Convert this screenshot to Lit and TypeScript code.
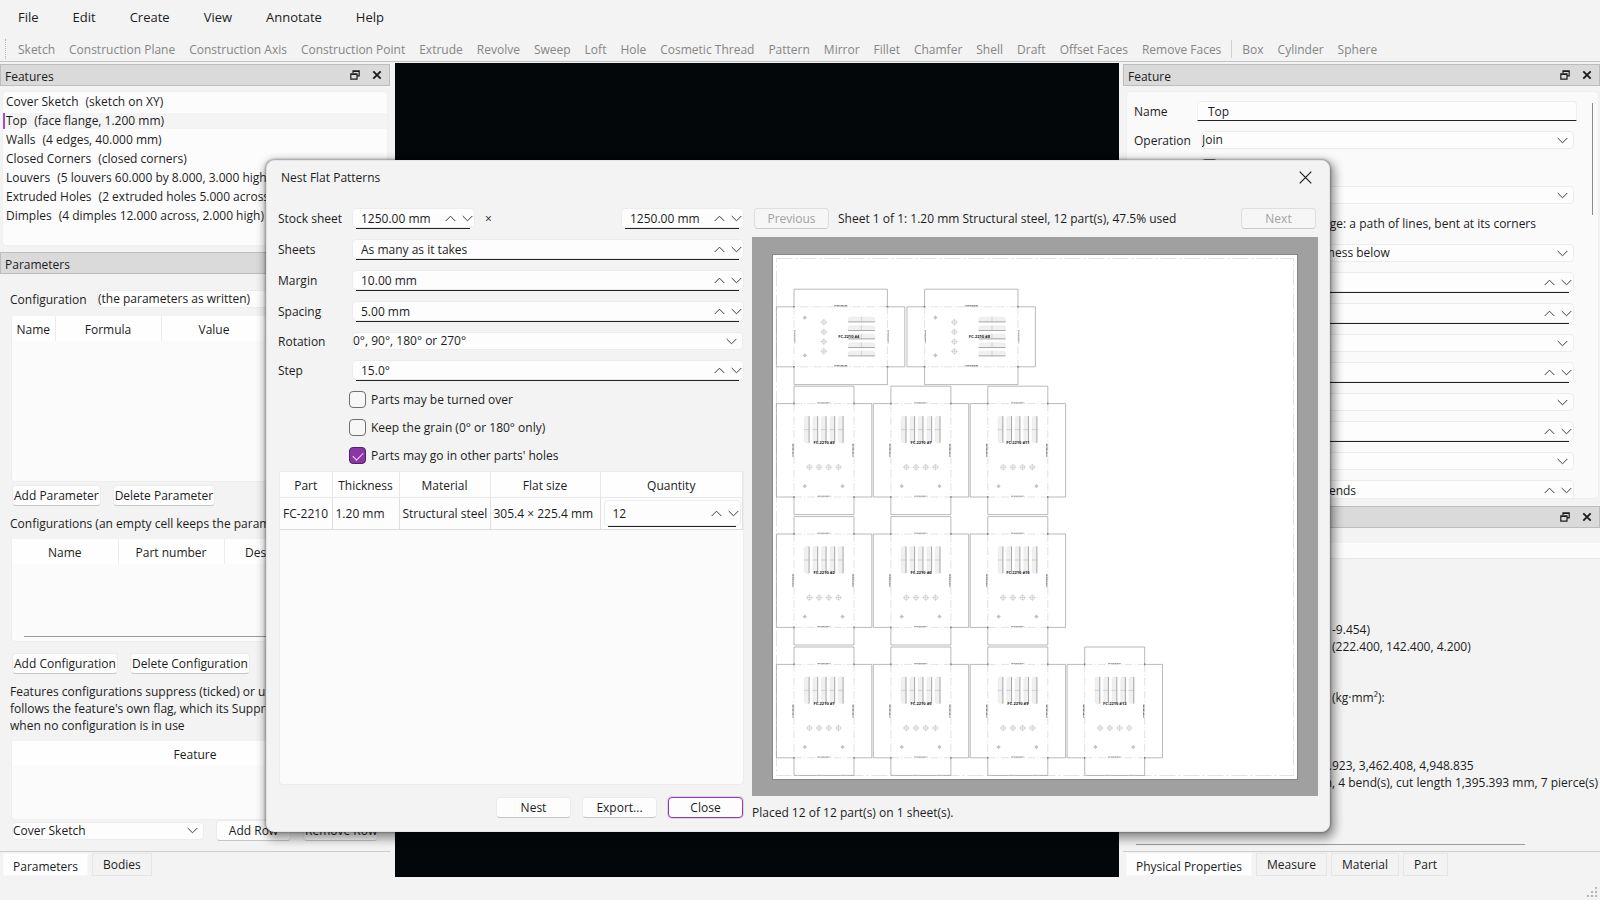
import { LitElement, html, svg, css, nothing } from "lit";
import { customElement } from "lit/decorators.js";

const MENUS = ["File", "Edit", "Create", "View", "Annotate", "Help"];
const TOOLS = ["Sketch", "Construction Plane", "Construction Axis", "Construction Point", "Extrude", "Revolve", "Sweep",
  "Loft", "Hole", "Cosmetic Thread", "Pattern", "Mirror", "Fillet", "Chamfer", "Shell", "Draft", "Offset Faces", "Remove Faces"];
const SOLIDS = ["Box", "Cylinder", "Sphere"];
const FEATURES = [
  ["Cover Sketch", "(sketch on XY)"],
  ["Top", "(face flange, 1.200 mm)"],
  ["Walls", "(4 edges, 40.000 mm)"],
  ["Closed Corners", "(closed corners)"],
  ["Louvers", "(5 louvers 60.000 by 8.000, 3.000 high)"],
  ["Extruded Holes", "(2 extruded holes 5.000 across, 3.000 high)"],
  ["Dimples", "(4 dimples 12.000 across, 2.000 high)"],
];
const PROPERTIES = [
  ["Centre of mass: (111.200, 71.200,\u00a0\u00a0", "-9.454)"],
  ["Bounding box: (0, 0, -40) to\u00a0\u00a0", "(222.400, 142.400, 4.200)"],
  ["", ""],
  ["", ""],
  ["Moments of inertia\u00a0\u00a0", "(kg·mm²):"],
  ["", ""],
  ["", ""],
  ["", ""],
  ["Principal moments: 1,688.", "923, 3,462.408, 4,948.835"],
  ["Flat: 305.400 by 225.400 mm", ", 4 bend(s), cut length 1,395.393 mm, 7 pierce(s)"],
];

/* Nested parts in canvas units: [x, y, number, turned]. */
const PART_H = 128.4;
const PARTS: [number, number, number, boolean][] = [
  [24.4, 52.2, 4, true], [155, 52.2, 8, true],
  [24.4, 149.2, 3, false], [121.3, 149.2, 7, false], [218.2, 149.2, 11, false],
  [24.4, 279.6, 2, false], [121.3, 279.6, 6, false], [218.2, 279.6, 10, false],
  [24.4, 410, 1, false], [121.3, 410, 5, false], [218.2, 410, 9, false], [315.1, 410, 12, false],
];

const up = html`<svg class="chev" viewBox="0 0 11 7" aria-hidden="true"><path d="M.7 6 5.5 1.2 10.3 6" /></svg>`;
const down = html`<svg class="chev" viewBox="0 0 11 7" aria-hidden="true"><path d="M.7 1 5.5 5.8 10.3 1" /></svg>`;

const spin = (id: string, value: string, label = "") => html`
  <div class="spin">
    <input id=${id} type="text" .value=${value} aria-label=${label || nothing} />
    <button aria-label="Increase">${up}</button><button aria-label="Decrease">${down}</button>
  </div>`;

const choice = (id: string, value: string, label = "") => html`
  <div class="choice">
    <select id=${id} aria-label=${label || nothing}><option>${value}</option></select>${down}
  </div>`;

const dockTitle = (title: string) => html`
  <header class="dock-title">
    <h2>${title}</h2>
    <button aria-label="Float">
      <svg width="10" height="10" viewBox="0 0 10 10" aria-hidden="true">
        <path d="M3 3V.8h6.2v5H7M3 1.4h6.2M.8 3.8h6.2v5.4H.8zM.8 4.5H7" fill="none" stroke="#1c1c1c" stroke-width="1.2" />
      </svg>
    </button>
    <button aria-label="Close">
      <svg width="10" height="10" viewBox="0 0 10 10" aria-hidden="true">
        <path d="M1.3 1.3l7.4 7.4M8.7 1.3 1.3 8.7" fill="none" stroke="#1c1c1c" stroke-width="1.9" />
      </svg>
    </button>
  </header>`;

const louver = (x: number) => svg`
  <path d="M${x} 32q.2-2 2-2h2.7v26.6h-2.7q-1.8 0-2-2z" fill="#f0f0f0" stroke="#d8d8d8" stroke-width=".3" />
  <path d="M${x + 4.7} 30v26.6" stroke="#8a8a8a" stroke-width=".7" />
  <path d="M${x - 0.5} 43.4h5.5" stroke="#b4b4b4" stroke-width=".5" />`;

const partShape = svg`
  <g fill="none">
    <path d="M17.6 0h60v17.4h17.8v93.4H77.6v17.6h-60v-17.6H0V17.4h17.6z" stroke="#8c8c8c" stroke-width=".6" />
    <path d="M17.6 17.4h60M17.6 110.8h60M17.6 17.4v93.4M77.6 17.4v93.4" stroke="#c4c4c4" stroke-width=".5" stroke-dasharray="8 2 1.2 2" />
    ${[28, 36.6, 45, 53.6, 62].map(louver)}
    ${[33, 42.7, 52.4, 62.1].map((x) => svg`
      <circle cx=${x} cy="81" r="2.3" stroke="#bcbcbc" stroke-width=".5" />
      <path d="M${x - 3.2} 81h6.4M${x} 77.8v6.4" stroke="#b4b4b4" stroke-width=".5" />`)}
    ${[28.4, 66.2].map((x) => svg`
      <circle cx=${x} cy="100" r="1.2" stroke="#a4a4a4" stroke-width=".5" />
      <path d="M${x - 2} 100h4M${x} 98v4" stroke="#a4a4a4" stroke-width=".5" />`)}
    <path d="M41 16.6h13M41 110h13" stroke="#6a6a6a" stroke-width=".7" stroke-dasharray="2.4 .4 1 .3" />
    <path d="M16.6 57.6v13M76.6 57.6v13" stroke="#505050" stroke-width=".9" stroke-dasharray="2.4 .4 1 .3" />
    <path d="M17.6 16.4v2M77.6 16.4v2M17.6 109.8v2M77.6 109.8v2" stroke="#555" stroke-width=".8" />
  </g>`;

@customElement("app-root")
export class AppRoot extends LitElement {
  static styles = css`
    :host {
      display: flex; flex-direction: column; height: 100vh; position: relative; overflow: hidden;
      background: #f3f3f3; color: #1c1c1c; font: 12px/17px "Open Sans", "Noto Sans", sans-serif;
    }
    * { box-sizing: border-box; }
    button, input, select { font: inherit; color: inherit; margin: 0; padding: 0; border: 0; background: none; outline: 0; }
    h1, h2, p, ul { margin: 0; padding: 0; font: inherit; }
    svg { display: block; }

    .menubar { display: flex; gap: 34px; height: 34px; padding: 0 18px; align-items: center; font-size: 13px; flex: none; }
    .toolbar { display: flex; gap: 14px; height: 28px; padding: 3px 5px 0; align-items: center; color: #858585; border-bottom: 1px solid #c2c2c2; flex: none; white-space: nowrap; }
    .grip { width: 2px; height: 20px; border-left: 1px dotted #b5b5b5; margin-right: -3px; }
    .divider { width: 1px; height: 18px; background: #d0d0d0; margin: 0 -4px; }

    .workspace { display: flex; flex: 1; min-height: 0; }
    .dock { display: flex; flex-direction: column; padding-top: 2px; min-width: 0; }
    .left { width: 390px; }
    .right { width: 477px; }
    .viewport { flex: 1; background: #03070a; margin: 1px 4px 0 5px; }
    .statusbar { height: 23px; flex: none; display: flex; justify-content: flex-end; align-items: flex-end; padding: 2px; }

    .dock-title { display: flex; align-items: center; gap: 12px; height: 22px; flex: none; padding: 0 7px 0 4px; background: #dadada; border: 1px solid #bdbdbd; }
    .dock-title h2 { flex: 1; padding-top: 2px; }
    .dock-title button { width: 10px; height: 10px; }

    .features { list-style: none; background: #fcfcfc; border: 1px solid #f0f0f0; border-radius: 4px; height: 155px; margin: 5px 2px 6px; flex: none; }
    .features li { display: flex; gap: 7px; height: 19px; align-items: center; padding-left: 3px; white-space: nowrap; overflow: hidden; }
    .features .current { background: linear-gradient(#a64cc0, #a64cc0) 0 50% / 2px 16px no-repeat, linear-gradient(#f4f4f4, #f4f4f4) 0 50% / 100% 16px no-repeat; }

    .params { flex: 1; display: flex; flex-direction: column; padding: 16px 11px 0; min-height: 0; }
    .config { display: grid; grid-template-columns: 87px minmax(0, 1fr); height: 17px; align-items: center; margin: 0 0 9px -1px; }
    .grid { background: #fbfbfb; border: 1px solid #eee; border-top: 0; border-radius: 0 0 4px 4px; }
    .grid.one { flex: 1; }
    .grid.two { height: 103px; display: flex; flex-direction: column; justify-content: space-between; }
    .grid.three { height: 79px; }
    .grid table { width: 100%; border-collapse: collapse; table-layout: fixed; }
    .grid th { height: 25px; padding: 2px 0 0; font-weight: 400; background: #fefefe; border-right: 1px solid #ececec; text-align: center; }
    .grid th:last-child { border-right: 0; }
    .grid .w44 { width: 43px; }
    .grid .w106 { width: 106px; }
    .scroll { height: 1px; background: #9a9a9a; margin: 0 12px 4px; }
    .buttons { display: flex; align-items: center; gap: 11px; }
    .params .buttons { margin-left: 1px; gap: 12px; }
    .params .btn { padding: 0 1px; }
    .after-one { margin-top: 3px; }
    .caption { margin: 9px 0 7px -1px; white-space: nowrap; overflow: hidden; }
    .after-two { margin-top: 11px; }
    .note { margin: 9px 0 7px -1px; white-space: nowrap; overflow: hidden; }
    .params .rowbar { margin: 0 0 10px 1px; }
    .rowbar .choice { width: 192px; }
    .btn { height: 21px; padding: 0 4px; background: #fdfdfd; border: 1px solid #ebebeb; border-bottom-color: #c6c6c6; border-radius: 4px; white-space: nowrap; text-align: center; }
    .btn.wide { width: 75px; }
    .btn.primary { border: 1px solid #8b3fa3; box-shadow: 0 0 0 1px #c79bd466; }
    .btn:disabled { background: #f6f6f6; color: #a2a2a2; border-color: #dedede; border-bottom-color: #cbcbcb; }

    .tabs { display: flex; gap: 4px; height: 26px; flex: none; border-top: 1px solid #cdcdcd; padding: 1px 3px 0; }
    .tab { height: 23px; padding: 0 10px; border: 1px solid #e6e6e6; }
    .tab.active { background: #fdfdfd; padding: 3px 9px 0; border-color: #f8f8f8; }

    .spin { display: flex; align-items: center; position: relative; height: 20px; padding: 0 0 0 8px; background: #fdfdfd; border: 1px solid #ececec; border-radius: 4px; min-width: 0; }
    .spin::after { content: ""; position: absolute; left: 3px; right: 4px; bottom: -2px; height: 1px; background: #222; }
    .spin input { flex: 1; width: 0; }
    .spin button { width: 17px; height: 16px; display: grid; place-items: center; }
    .spin button:last-child { width: 13px; margin-left: 2px; }
    .chev { width: 11px; height: 7px; fill: none; stroke: #3c3c3c; stroke-width: 1; }
    .choice { display: grid; align-items: center; height: 18px; background: #fdfdfd; border: 1px solid #ececec; border-radius: 4px; min-width: 0; }
    .choice select { grid-area: 1 / 1; width: 100%; height: 16px; line-height: 16px; appearance: none; }
    .choice .chev { grid-area: 1 / 1; justify-self: end; margin-right: 5px; pointer-events: none; }

    .properties { position: relative; height: 408px; flex: none; margin: 5px 1px 7px 3px; padding: 9px 21px 0 7px; overflow: hidden; background: #fafafa; border: 1px solid #efefef; border-radius: 4px; }
    .fields { display: grid; grid-template-columns: 67px minmax(0, 1fr); grid-auto-rows: max-content; gap: 10px 0; align-items: center; }
    .fields .spin, .form .spin { margin-bottom: 1px; }
    .fields .spin, .fields .choice { margin-right: 3px; }
    .fields .name { height: 20px; margin-left: -4px; padding-left: 10px; background: #fdfdfd; border: 1px solid #eee; border-bottom: 1px solid #222; border-radius: 4px 4px 0 0; }
    .fields .hint { grid-column: 2; height: 20px; line-height: 20px; text-align: right; padding-right: 41px; white-space: nowrap; }
    .fields .second { grid-column: 2; }
    .vscroll { position: absolute; right: 5px; top: 11px; width: 1px; height: 112px; background: #8a8a8a; }
    .physical { flex: 1; display: flex; flex-direction: column; padding-top: 15px; overflow: hidden; }
    .strip { height: 16px; background: #fbfbfb; border-bottom: 1px solid #e8e8e8; flex: none; }
    .lines { flex: 1; padding: 62px 0 0 6px; }
    .line { display: grid; grid-template-columns: 203px 1fr; height: 17px; white-space: nowrap; }
    .line span { overflow: hidden; }
    .line span:first-child { text-align: right; }
    .physical .scroll { margin: 0 75px 6px 13px; }

    .dialog { position: absolute; inset: 160px 270px 68px 266px; display: flex; flex-direction: column; background: #f3f3f3; border: 1px solid #e4e4e4; border-radius: 8px; padding: 0 11px 9px; box-shadow: 0 0 3px #0008, 2px 4px 10px 3px #0006; }
    .title { display: flex; justify-content: space-between; align-items: center; height: 32px; padding: 0 6px 0 3px; flex: none; }
    .content { flex: 1; display: grid; grid-template-columns: 466px 1fr; gap: 8px; padding-top: 14px; min-height: 0; }
    .setup, .preview { display: flex; flex-direction: column; min-width: 0; min-height: 0; }
    .setup { padding: 1px 0 4px; }
    .form { display: grid; grid-template-columns: 74px 1fr; gap: 10px 0; align-items: center; }
    .pair { display: grid; grid-template-columns: 123px 1fr 123px; align-items: center; }
    .pair span { padding-left: 10px; }
    .form .choice { margin-right: 1px; }
    .checks { display: grid; gap: 11px; margin: 10px 0 7px 71px; }
    .checks label, .tick { display: flex; gap: 5px; align-items: center; height: 17px; }
    input[type="checkbox"] { appearance: none; width: 17px; height: 17px; border: 1px solid #6f6f6f; border-radius: 4px; background: #f7f7f7; display: grid; place-items: center; }
    input[type="checkbox"]:checked { background: #8c35a6; border-color: #4f2360; }
    input[type="checkbox"]:checked::before { content: ""; width: 9px; height: 5px; border: solid #f0dff5; border-width: 0 0 1px 1px; transform: translateY(-1px) rotate(-45deg); }
    .parts { flex: 1; margin: 0 0 12px 1px; background: #fbfbfb; border: 1px solid #ececec; border-radius: 0 0 4px 4px; }
    .parts table { width: 100%; border-collapse: collapse; table-layout: fixed; }
    .parts th { height: 25px; padding: 2px 0 0; font-weight: 400; background: #fefefe; border-right: 1px solid #e8e8e8; border-bottom: 1px solid #e8e8e8; }
    .parts td { height: 32px; padding: 0 0 0 3px; background: #fdfdfd; border-right: 1px solid #e0e0e0; border-bottom: 1px solid #dcdcdc; white-space: nowrap; }
    .parts .spin { height: 26px; margin-right: 1px; }
    .c1 { width: 52px; } .c2 { width: 67px; } .c3 { width: 91px; } .c4 { width: 110px; }
    .pager { display: flex; align-items: center; gap: 9px; height: 22px; margin-bottom: 8px; padding: 0 2px; }
    .actions { justify-content: flex-end; padding-right: 1px; }
    .pager span { flex: 1; }
    .canvas { flex: 1; width: 100%; min-height: 0; background: #a0a0a0; }
    .canvas text { font: 700 4px "Open Sans", sans-serif; fill: #222; text-anchor: middle; }
    .result { height: 18px; margin-top: 8px; }
  `;

  render() {
    return html`
      <nav class="menubar">${MENUS.map((m) => html`<button>${m}</button>`)}</nav>
      <div class="toolbar" role="toolbar">
        <span class="grip"></span>
        ${TOOLS.map((t) => html`<button>${t}</button>`)}
        <span class="divider"></span>
        ${SOLIDS.map((t) => html`<button>${t}</button>`)}
      </div>
      <main class="workspace">
        <section class="dock left">${this.leftDock()}</section>
        <div class="viewport"></div>
        <section class="dock right">${this.rightDock()}</section>
      </main>
      <footer class="statusbar">
        <svg width="11" height="11" viewBox="0 0 11 11" fill="#b4b4b4" aria-hidden="true">
          <path d="M8 0h2v2H8zM8 4h2v2H8zM4 4h2v2H4zM8 8h2v2H8zM4 8h2v2H4zM0 8h2v2H0z" />
        </svg>
      </footer>
      ${this.dialog()}`;
  }

  private leftDock() {
    return html`
      ${dockTitle("Features")}
      <ul class="features">
        ${FEATURES.map(([name, info], i) => html`<li class=${i === 1 ? "current" : ""}><span>${name}</span><span>${info}</span></li>`)}
      </ul>
      ${dockTitle("Parameters")}
      <div class="params">
        <div class="config"><label for="config">Configuration</label>${choice("config", "(the parameters as written)")}</div>
        <div class="grid one">
          <table><tr><th class="w44">Name</th><th class="w106">Formula</th><th class="w106">Value</th><th>Comment</th></tr></table>
        </div>
        <div class="buttons after-one"><button class="btn">Add Parameter</button><button class="btn">Delete Parameter</button></div>
        <p class="caption">Configurations (an empty cell keeps the parameter)</p>
        <div class="grid two">
          <table><tr><th class="w106">Name</th><th class="w106">Part number</th><th class="w106">Description</th><th></th></tr></table>
          <div class="scroll"></div>
        </div>
        <div class="buttons after-two"><button class="btn">Add Configuration</button><button class="btn">Delete Configuration</button></div>
        <p class="note">Features configurations suppress (ticked) or unsuppress; a blank<br />follows the feature's own flag, which its Suppress box sets<br />when no configuration is in use</p>
        <div class="grid three"><table><tr><th>Feature</th></tr></table></div>
        <div class="buttons rowbar">
          ${choice("row-feature", "Cover Sketch", "Feature")}
          <button class="btn wide">Add Row</button><button class="btn wide">Remove Row</button>
        </div>
      </div>
      <nav class="tabs"><button class="tab active">Parameters</button><button class="tab">Bodies</button></nav>`;
  }

  private rightDock() {
    return html`
      ${dockTitle("Feature")}
      <div class="properties">
        <div class="fields">
          <label for="name">Name</label><input id="name" class="name" type="text" .value=${"Top"} />
          <label for="operation">Operation</label>${choice("operation", "Join")}
          <label class="tick second"><input type="checkbox" />Suppressed</label>
          <label for="profile">Profile</label>${choice("profile", "Cover Sketch")}
          <p class="hint">As a contour flange: a path of lines, bent at its corners</p>
          <label for="side">Side</label>${choice("side", "Sketch plane and thickness below")}
          <label for="thickness">Thickness</label>${spin("thickness", "1.200 mm")}
          <label for="radius">Radius</label>${spin("radius", "1.200 mm")}
          <label for="bend">Bend</label>${choice("bend", "K-factor")}
          <label for="factor">K-factor</label>${spin("factor", "0.440")}
          <label for="relief">Relief</label>${choice("relief", "Rectangular")}
          <label for="width">Width</label>${spin("width", "1.200 mm")}
          <label for="corner">Corner</label>${choice("corner", "Open")}
          <label for="ends">Ends</label>${spin("ends", "Set the same at both ends")}
        </div>
        <div class="vscroll"></div>
      </div>
      ${dockTitle("Physical Properties")}
      <div class="physical">
        <div class="strip"></div>
        <div class="lines">${PROPERTIES.map(([a, b]) => html`<div class="line"><span>${a}</span><span>${b}</span></div>`)}</div>
        <div class="scroll"></div>
      </div>
      <nav class="tabs">
        <button class="tab active">Physical Properties</button><button class="tab">Measure</button><button class="tab">Material</button><button class="tab">Part</button>
      </nav>`;
  }

  private dialog() {
    return html`
      <section class="dialog" role="dialog" aria-labelledby="dialog-title">
        <header class="title">
          <h1 id="dialog-title">Nest Flat Patterns</h1>
          <button aria-label="Close window">
            <svg width="13" height="13" viewBox="0 0 13 13" aria-hidden="true"><path d="M.7.7l11.6 11.6M12.3.7.7 12.3" fill="none" stroke="#1c1c1c" stroke-width="1.2" /></svg>
          </button>
        </header>
        <div class="content">
          <div class="setup">
            <div class="form">
              <label for="sheet-w">Stock sheet</label>
              <div class="pair">${spin("sheet-w", "1250.00 mm")}<span>×</span>${spin("sheet-h", "1250.00 mm", "Stock sheet height")}</div>
              <label for="sheets">Sheets</label>${spin("sheets", "As many as it takes")}
              <label for="margin">Margin</label>${spin("margin", "10.00 mm")}
              <label for="spacing">Spacing</label>${spin("spacing", "5.00 mm")}
              <label for="rotation">Rotation</label>${choice("rotation", "0°, 90°, 180° or 270°")}
              <label for="step">Step</label>${spin("step", "15.0°")}
            </div>
            <div class="checks">
              <label><input type="checkbox" />Parts may be turned over</label>
              <label><input type="checkbox" />Keep the grain (0° or 180° only)</label>
              <label><input type="checkbox" checked />Parts may go in other parts' holes</label>
            </div>
            <div class="parts">
              <table>
                <tr><th class="c1">Part</th><th class="c2">Thickness</th><th class="c3">Material</th><th class="c4">Flat size</th><th>Quantity</th></tr>
                <tr><td>FC-2210</td><td>1.20 mm</td><td>Structural steel</td><td>305.4 × 225.4 mm</td><td>${spin("qty", "12", "Quantity")}</td></tr>
              </table>
            </div>
            <div class="buttons actions">
              <button class="btn wide">Nest</button><button class="btn wide">Export...</button><button class="btn wide primary">Close</button>
            </div>
          </div>
          <div class="preview">
            <div class="pager">
              <button class="btn wide" disabled>Previous</button>
              <span>Sheet 1 of 1: 1.20 mm Structural steel, 12 part(s), 47.5% used</span>
              <button class="btn wide" disabled>Next</button>
            </div>
            <svg class="canvas" viewBox="0 0 566 559" role="img" aria-label="Nested sheet">
              <rect x="20.5" y="17.5" width="525" height="525" fill="#fff" stroke="#858585" />
              <rect x="24.5" y="21.5" width="517" height="517" fill="none" stroke="#dadada" stroke-width=".8" stroke-dasharray="16 3 2 3" />
              ${PARTS.map(([x, y, n, turned]) => svg`
                <g transform=${turned ? `translate(${x + PART_H} ${y}) rotate(90)` : `translate(${x} ${y})`}>${partShape}</g>
                <text x=${x + (turned ? 72.4 : 47.7)} y=${y + (turned ? 49.2 : 57.7)}>FC-2210 #${n}</text>`)}
            </svg>
            <p class="result">Placed 12 of 12 part(s) on 1 sheet(s).</p>
          </div>
        </div>
      </section>`;
  }
}
